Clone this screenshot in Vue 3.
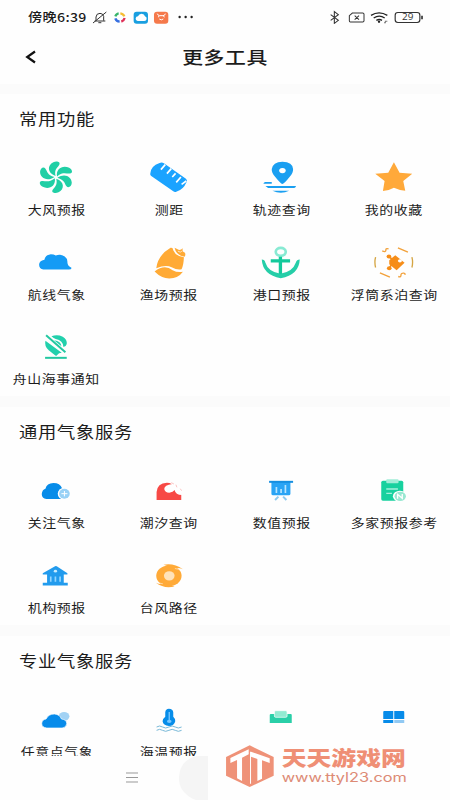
<script setup>
const sections = [
  {
    title: '常用功能',
    items: [
      { label: '大风预报', icon: 'fan', box: '108.75 231 120 120' },
      { label: '测距', icon: 'ruler', box: '446.25 231 120 120' },
      { label: '轨迹查询', icon: 'track', box: '108.75 231 120 120' },
      { label: '我的收藏', icon: 'star', box: '446.25 231 120 120' },
      { label: '航线气象', icon: 'cloud', box: '108.75 34.5 120 120' },
      { label: '渔场预报', icon: 'fish', box: '446.25 34.5 120 120' },
      { label: '港口预报', icon: 'anchor', box: '108.75 34.5 120 120' },
      { label: '浮筒系泊查询', icon: 'buoy', box: '446.25 34.5 120 120' },
      { label: '舟山海事通知', icon: 'notice', box: '108.75 288 120 120' },
    ],
  },
  {
    title: '通用气象服务',
    items: [
      { label: '关注气象', icon: 'follow', box: '108.75 180 120 120' },
      { label: '潮汐查询', icon: 'tide', box: '446.25 180 120 120' },
      { label: '数值预报', icon: 'board', box: '108.75 180 120 120' },
      { label: '多家预报参考', icon: 'clipboard', box: '446.25 180 120 120' },
      { label: '机构预报', icon: 'bank', box: '108.75 43.5 120 120' },
      { label: '台风路径', icon: 'typhoon', box: '446.25 43.5 120 120' },
    ],
  },
  {
    title: '专业气象服务',
    items: [
      { label: '任意点气象', icon: 'point', box: '108.75 57 120 120' },
      { label: '海温预报', icon: 'thermo', box: '446.25 57 120 120' },
      { label: '', icon: 'tray', box: '108.75 57 120 120' },
      { label: '', icon: 'grid', box: '446.25 57 120 120' },
    ],
  },
]
const blades = [0, 60, 120, 180, 240, 300]
</script>

<template>
  <div class="page">
    <div class="status">
      <span class="time">傍晚6:39</span>
      <svg class="status-left" viewBox="276 28 310 44">
        <g fill="none" stroke="#333" stroke-width="3">
          <path d="M284 61h32M288 60V49q1-11 12-11q9 0 11 9v13M279 67l40-33" />
          <path d="M295 66h9" />
        </g>
        <g fill="none" stroke-width="7">
          <path d="M346 47q3-8 10-9" stroke="#38b56b" />
          <path d="M361 38q9 1 12 9" stroke="#f5bd32" />
          <path d="M374 52q-2 8-10 11" stroke="#df3158" />
          <path d="M359 63q-10-1-13-10" stroke="#366fe0" />
        </g>
        <rect x="401" y="33" width="43" height="36" rx="9" fill="#199fe0" />
        <path d="M413 61q-7-1-6-8q1-6 7-6q3-8 11-8q8 1 10 8q6 2 5 8q-1 6-7 6z" fill="#fff" />
        <rect x="462" y="33" width="43" height="36" rx="9" fill="#f5794b" />
        <path d="M472 39q2 6 7 6h10q6 0 7-6M474 49l4-2M490 47l4 2M478 55q6 5 12 0" fill="none" stroke="#fff" stroke-width="3" />
        <g fill="#222"><circle cx="539" cy="49" r="3.6" /><circle cx="557" cy="49" r="3.6" /><circle cx="575" cy="49" r="3.6" /></g>
      </svg>
      <svg class="status-right" viewBox="310 28 290 44">
        <path d="M318 42l23 17l-12 9V33l12 9l-23 17" fill="none" stroke="#333" stroke-width="3.200" />
        <path d="M383 37h31q4 0 4 4v19q0 4-4 4h-37q-3 0-3-4V45zM390 45l13 12M403 45l-13 12" fill="none" stroke="#333" stroke-width="3" />
        <g fill="none" stroke="#222" stroke-width="4">
          <path d="M439 44q24-15 49 0M447 52q17-11 33 0M455 59q9-5 17 0" />
        </g>
        <circle cx="463" cy="63" r="3.5" fill="#222" />
        <path d="M478 66h4v-4h6" fill="none" stroke="#777" stroke-width="3" />
        <rect x="511.500" y="35.500" width="74" height="30" rx="8" fill="none" stroke="#333" stroke-width="3.500" />
        <path d="M592 45v11" stroke="#333" stroke-width="5" />
        <text x="532" y="59" textLength="34" lengthAdjust="spacingAndGlyphs" class="battery">29</text>
      </svg>
    </div>

    <header class="header">
      <svg class="back" viewBox="0 0 12 14"><path d="M10 1.500L2.200 7L10 12.500" fill="none" stroke="#111" stroke-width="2.200" /></svg>
      <h1>更多工具</h1>
    </header>

    <main class="content">
      <section v-for="section in sections" :key="section.title" class="section">
        <h2>{{ section.title }}</h2>
        <div class="tools">
          <div v-for="item in section.items" :key="item.icon" class="tool">
            <svg class="icon" :viewBox="item.box">
              <g v-if="item.icon === 'fan'" fill="#20cfa5" transform="translate(168.500 292) scale(1.120 1)">
                <path v-for="a in blades" :key="a" :transform="`rotate(${a})`" d="M-1-4C-24-13-23-36-7-45C2-50 13-46 9-38C4-28-5-25-1-4Z" />
              </g>
              <template v-else-if="item.icon === 'ruler'">
                <path d="M450 281Q451 258 478 249Q485 246 491 250L557 296Q562 300 559 306Q549 330 528 335Q523 337 518 333L453 288Q449 285 450 281Z" fill="#1ba3ff" />
                <path d="M495 254l-13 15M513 266l-13 15M526 280l-10 11M542 291l-14 16M558 303l-14 10" stroke="#fff" stroke-width="5" />
              </template>
              <g v-else-if="item.icon === 'track'" fill="#1a9ff1">
                <path fill-rule="evenodd" d="M173 312Q167 310 151 290Q140 278 141 267Q144 246 173 245Q204 246 205 267Q206 278 195 290Q180 309 173 312ZM173 264a10 8 0 1 0 .1 0Z" />
                <path d="M116 311q1-5 6-5h19v5zM122 318h92q-2 6-6 6h-78zM143 332h50q-24 12-50 0z" />
              </g>
              <path v-else-if="item.icon === 'star'" d="M506 247L523 278L561 281L534 303L540 332Q523 331 506 323Q490 332 473 333L478 303L450 281L489 278Z" fill="#ffa93a" />
              <path v-else-if="item.icon === 'cloud'" d="M131 117Q118 115 118 103Q118 91 134 88Q136 73 153 71Q162 71 168 75Q183 70 195 78Q204 84 203 97Q204 107 215 112Q216 117 207 117Z" fill="#149bf5" />
              <template v-else-if="item.icon === 'fish'">
                <path d="M468 113Q473 74 511 52Q518 50 519 59Q527 78 551 80Q550 104 544 116Q531 119 514 110Q497 101 468 113Z" fill="#ffaa35" />
                <path d="M463 123Q493 100 517 119Q531 127 548 124Q534 144 507 144Q484 144 463 123ZM523 52l12 6q8 1 12-5l0 9l7 5q3 5-1 12q-25-4-30-27z" fill="#ffaa35" />
                <path d="M533 62l7 3l5-3" fill="none" stroke="#fff" stroke-width="2" />
              </template>
              <template v-else-if="item.icon === 'anchor'">
                <ellipse cx="168" cy="64" rx="15" ry="12" fill="none" stroke="#88ead3" stroke-width="8" />
                <path d="M138 91h58M167 79v59" fill="none" stroke="#13c99b" stroke-width="10" />
                <path d="M111 87q9 0 11 10q8 27 45 33q37-6 46-33q3-10 12-10q-2 46-57 56q-54-9-57-56z" fill="#25cea8" />
              </template>
              <g v-else-if="item.icon === 'buoy'" fill="none" stroke="#f2a13a" stroke-width="4">
                <path d="M510 74L538 97L514 119L492 101V89Z" fill="#f68d18" stroke="none" />
                <path d="M498 84h9v14h-9z" fill="#f68d18" stroke="none" />
                <ellipse cx="491" cy="78" rx="7" ry="6" fill="#f68d18" stroke="none" />
                <ellipse cx="492" cy="113" rx="7" ry="6" fill="#f68d18" stroke="none" />
                <path d="M491 78L506 91L492 113" stroke="#f68d18" stroke-width="5" />
                <ellipse cx="524" cy="91" rx="6" ry="5" fill="#fff" stroke="none" />
                <path d="M471 61q12 6 11-5q1-3 8-1M518 52l30 13M464 127l30 13M519 138q9 3 8-4q0-7 9-6q4 0 3 5" />
                <path d="M451 80q-4 15 0 31M560 80q4 15 0 31" stroke="#d5a543" />
              </g>
              <template v-else-if="item.icon === 'notice'">
                <path d="M137 332L186 368L178 370L169 378L160 371L147 361Q133 348 137 332Z" fill="#22d0ac" />
                <path d="M155 319Q172 312 189 320Q203 329 201 342Q199 350 191 351Q190 331 168 327Q162 326 155 319ZM163 331Q184 334 185 349Z" fill="#22d0ac" />
                <path d="M139 316L197 367" stroke="#22c8a1" stroke-width="6" />
                <path d="M136 383.500h65" stroke="#22c8a1" stroke-width="6" />
              </template>
              <template v-else-if="item.icon === 'follow'">
                <path d="M140 267Q126 266 126 252Q127 239 137 236Q141 220 161 219Q181 219 187 235L197 240V267Z" fill="#078ce9" />
                <ellipse cx="193" cy="251" rx="19" ry="18" fill="#fff" />
                <ellipse cx="194" cy="251" rx="16" ry="15" fill="#98d1f6" />
                <path d="M194 243v16M185 251h18" stroke="#fff" stroke-width="3" />
              </template>
              <template v-else-if="item.icon === 'tide'">
                <path d="M469 270V246Q471 219 500 218Q508 218 514 222L530 240L543 250V270Z" fill="#f74945" />
                <path d="M516 222Q492 225 492 237Q494 248 507 248Q519 247 523 240Q526 255 545 255V236L530 222Z" fill="#fff" />
                <path d="M513 218l8 4M527 224l3 8M540 236l4 6" stroke="#f9a6a4" stroke-width="2" />
              </template>
              <template v-else-if="item.icon === 'board'">
                <path d="M140 216h57v35q0 5-5 5h-47q-5 0-5-5z" fill="#2aa4f5" />
                <path d="M133 212.500h72v6h-72z" fill="#168fe0" />
                <path d="M155 231v18M169 237v12M182 225v24" stroke="#b6e4ff" stroke-width="5" />
                <path d="M161 260l-10 10M175 260l10 10" stroke="#8dc9ee" stroke-width="6" />
              </template>
              <template v-else-if="item.icon === 'clipboard'">
                <rect x="468" y="212" width="66" height="60" rx="5" fill="#18d19f" />
                <rect x="483" y="208" width="37" height="12" rx="3" fill="#a2edd8" />
                <path d="M483 237h35M483 250h17" stroke="#a4f0dc" stroke-width="4" />
                <ellipse cx="524" cy="259" rx="21" ry="17" fill="#fff" />
                <ellipse cx="525" cy="259" rx="17" ry="14" fill="#9ae8d2" />
                <path d="M517 266v-13l14 12v-13" fill="none" stroke="#fff" stroke-width="4" />
              </template>
              <template v-else-if="item.icon === 'bank'">
                <path d="M129 98L166 77q2-1 5 0L203 98v4H129zM142 102h50v25h12v8h-75v-8h13z" fill="#229bed" />
                <path d="M153 108v16M167 108v16M181 108v16" stroke="#91d5ff" stroke-width="5" />
                <ellipse cx="167" cy="92" rx="5" ry="4" fill="#c9edff" />
              </template>
              <template v-else-if="item.icon === 'typhoon'">
                <ellipse cx="506" cy="106" rx="38" ry="31" fill="#ffaa38" />
                <path d="M490 73Q520 67 548 86Q533 80 522 84ZM523 138Q492 146 467 127Q481 133 493 129Z" fill="#ffaa38" />
                <path d="M524 84q12 1 18 7M488 130q-12-1-18-7" fill="none" stroke="#fff" stroke-width="1.500" />
                <ellipse cx="507" cy="106" rx="16" ry="14" fill="#ffe2ba" />
              </template>
              <template v-else-if="item.icon === 'point'">
                <ellipse cx="193" cy="109" rx="16" ry="13" fill="#a2d2f4" />
                <path d="M141 144Q126 142 126 131Q126 119 139 117Q146 102 164 102Q180 103 185 117Q201 119 201 131Q200 143 187 144Z" fill="#078bea" stroke="#fff" stroke-width="2" />
              </template>
              <template v-else-if="item.icon === 'thermo'">
                <path d="M495 97q1-11 11-11q12 0 13 11v13q7 6 6 14q-3 14-19 14q-17-1-19-14q0-8 8-14z" fill="#078de9" />
                <path d="M507 96v26" stroke="#79c8ff" stroke-width="4" />
                <ellipse cx="507" cy="124" rx="7" ry="5" fill="#79c8ff" />
                <path d="M469 141q9-6 18 0t19 0t19 0t19 0M469 151q9-6 18 0t19 0t19 0t19 0" fill="none" stroke="#79b9d8" stroke-width="3" />
              </template>
              <template v-else-if="item.icon === 'tray'">
                <path d="M135 105q0-3 3-3h60q3 0 3 3v24h-66z" fill="#2acfa8" />
                <rect x="149" y="92" width="38" height="20" rx="4" fill="#92ebd2" stroke="#fff" stroke-width="2" />
              </template>
              <template v-else>
                <path d="M477 93h27v24h-30V96q0-3 3-3zM507 93h27q3 0 3 3v21h-30zM474 120h30v9h-30z" fill="#078be9" />
                <path d="M507 120h30v9h-30z" fill="#91c9f3" />
              </template>
            </svg>
            <span v-if="item.label" class="label">{{ item.label }}</span>
          </div>
        </div>
      </section>
    </main>

    <footer class="navbar">
      <svg class="menu" viewBox="0 0 12 11"><path d="M0 1h12M0 5.500h12M0 10h12" stroke="#999" stroke-width="1" /></svg>
      <svg class="home" viewBox="0 0 29 45"><path d="M29 0H18C4 3 0 13 0 23S8 42 20 45h9z" fill="#f5f5f5" /></svg>
    </footer>

    <svg class="watermark" viewBox="0 0 550 130">
      <path d="M74 4L146 39V95L74 129L3 95V39Z" fill="#ef9278" />
      <path d="M16 42L71 16V31L51 41V111L36 103V48L16 57Z" fill="#fff" />
      <path d="M78 23L134 43V57L111 49V104L97 111V45L78 38V119H75V23Z" fill="#fff" />
      <text x="170" y="66" textLength="373" lengthAdjust="spacingAndGlyphs" class="brand">天天游戏网</text>
      <text x="170" y="113" textLength="376" lengthAdjust="spacingAndGlyphs" class="url">www.ttyl23.com</text>
    </svg>
  </div>
</template>

<style>
body {
  margin: 0;
  background: #fefefe;
}
</style>

<style scoped>
.page {
  position: relative;
  display: flex;
  flex-direction: column;
  width: 450px;
  height: 800px;
  overflow: hidden;
  background: #fefefe;
  color: #1c1c1c;
  font-family: "Noto Sans CJK SC", sans-serif;
}
.status {
  display: flex;
  align-items: center;
  height: 34px;
  flex: none;
}
.time {
  width: 50px;
  margin-left: 27.500px;
  font-size: 12.300px;
  line-height: 18px;
  font-weight: 500;
  letter-spacing: 0.300px;
  white-space: nowrap;
  transform: scaleX(1.150);
  transform-origin: left;
}
.status-left {
  width: 103.300px;
  height: 14.700px;
  margin-left: 14.500px;
}
.status-right {
  width: 96.700px;
  height: 14.700px;
  margin-left: auto;
  margin-right: 25px;
}
.battery {
  font: 25px "Open Sans", sans-serif;
  fill: #333;
}
.header {
  display: grid;
  grid-template-columns: 1fr auto 1fr;
  align-items: center;
  height: 48px;
  margin-bottom: 2px;
  padding: 0 25px;
  flex: none;
}
.back {
  width: 12px;
  height: 14px;
  margin-bottom: 2px;
}
h1 {
  margin: 0 0 3px;
  font-size: 17.500px;
  line-height: 28px;
  font-weight: 500;
  letter-spacing: 0.500px;
  transform: scaleX(1.190);
}
.content {
  flex: 1;
  min-height: 0;
  overflow: hidden;
  display: flex;
  flex-direction: column;
  gap: 11px;
  padding-top: 10px;
  background: #fbfbfb;
}
.section {
  flex: none;
  padding: 12px 0 8px;
  background: #fefefe;
}
h2 {
  margin: 0 0 27px 18.500px;
  font-size: 15.500px;
  line-height: 24px;
  font-weight: 400;
  letter-spacing: 0.600px;
  transform: scaleX(1.180);
  transform-origin: left;
}
.tools {
  display: grid;
  grid-template-columns: repeat(4, 1fr);
  row-gap: 22.500px;
}
.tool {
  display: flex;
  flex-direction: column;
  align-items: center;
  gap: 4px;
  height: 62px;
}
.icon {
  width: 40px;
  height: 40px;
  flex: none;
}
.label {
  padding-left: 0.800px;
  font-size: 12px;
  line-height: 18px;
  letter-spacing: 0.500px;
  white-space: nowrap;
  transform: scaleX(1.160);
}
.navbar {
  display: flex;
  height: 44.500px;
  flex: none;
}
.menu {
  width: 12px;
  height: 11px;
  margin: 16.500px 0 0 126px;
}
.home {
  width: 29px;
  height: 45px;
  margin-left: 41px;
}
.watermark {
  position: absolute;
  left: 225px;
  top: 743.500px;
  width: 183.300px;
  height: 43.300px;
}
.brand {
  font: 900 62px "Noto Sans CJK SC", sans-serif;
  fill: #ef8f75;
}
.url {
  font: 38px Inter, sans-serif;
  fill: #dd8b76;
}
</style>
